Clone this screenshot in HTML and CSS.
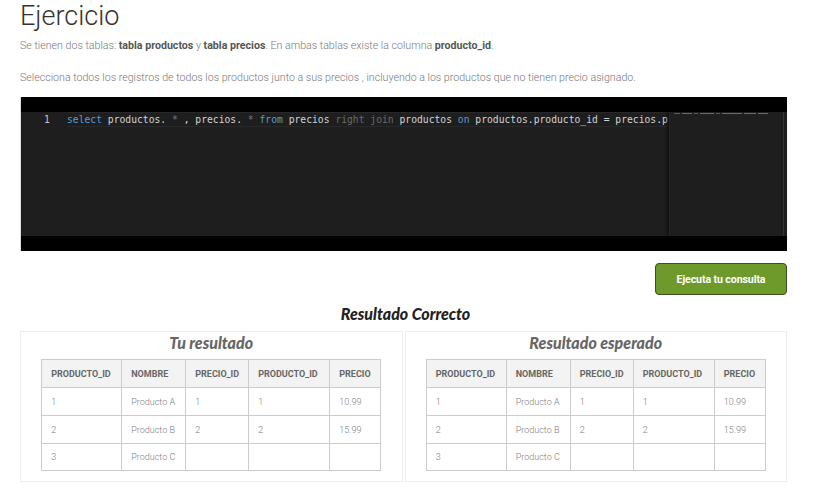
FILE: index.html
```html
<!DOCTYPE html>
<html lang="es">
<head>
<meta charset="utf-8">
<title>Ejercicio</title>
<link rel="stylesheet" href="styles.css">
</head>
<body>
<div class="page">
  <h1 class="title">Ejercicio</h1>
  <p class="text">Se tienen dos tablas: <b>tabla productos</b> y <b>tabla precios</b>. En ambas tablas existe la columna <b>producto_id</b>.</p>
  <p class="text second">Selecciona todos los registros de todos los productos junto a sus precios , incluyendo a los productos que no tienen precio asignado.</p>

  <div class="editor">
    <div class="editor-bar"></div>
    <div class="editor-body">
      <div class="code-area">
        <div class="line">
          <span class="ln">1</span>
          <span class="code"><span class="kw">select</span> productos. <span class="op">*</span> , precios. <span class="op">*</span> <span class="kw">from</span> precios <span class="dim">right join</span> productos <span class="kw">on</span> productos.producto_id = precios.producto_id</span>
        </div>
      </div>
      <div class="minimap">
        <div class="mini-line">
          <span class="mb b w6"></span><span class="mb g w10"></span><span class="mb b w4"></span><span class="mb g w14"></span><span class="mb b w4"></span><span class="mb g w20"></span><span class="mb g w12"></span><span class="mb g w10"></span>
        </div>
        <div class="mini-scroll"></div>
      </div>
    </div>
    <div class="editor-bar"></div>
  </div>

  <div class="actions">
    <button class="run-btn">Ejecuta tu consulta</button>
  </div>

  <h2 class="status">Resultado Correcto</h2>

  <div class="results">
    <div class="panel">
      <h3 class="panel-title">Tu resultado</h3>
      <table class="grid">
        <colgroup><col class="c1"><col class="c2"><col class="c3"><col class="c4"><col class="c5"></colgroup>
        <thead><tr><th>PRODUCTO_ID</th><th>NOMBRE</th><th>PRECIO_ID</th><th>PRODUCTO_ID</th><th>PRECIO</th></tr></thead>
        <tbody>
          <tr><td>1</td><td>Producto A</td><td>1</td><td>1</td><td>10.99</td></tr>
          <tr><td>2</td><td>Producto B</td><td>2</td><td>2</td><td>15.99</td></tr>
          <tr><td>3</td><td>Producto C</td><td></td><td></td><td></td></tr>
        </tbody>
      </table>
    </div>
    <div class="panel">
      <h3 class="panel-title">Resultado esperado</h3>
      <table class="grid">
        <colgroup><col class="c1"><col class="c2"><col class="c3"><col class="c4"><col class="c5"></colgroup>
        <thead><tr><th>PRODUCTO_ID</th><th>NOMBRE</th><th>PRECIO_ID</th><th>PRODUCTO_ID</th><th>PRECIO</th></tr></thead>
        <tbody>
          <tr><td>1</td><td>Producto A</td><td>1</td><td>1</td><td>10.99</td></tr>
          <tr><td>2</td><td>Producto B</td><td>2</td><td>2</td><td>15.99</td></tr>
          <tr><td>3</td><td>Producto C</td><td></td><td></td><td></td></tr>
        </tbody>
      </table>
    </div>
  </div>
</div>
</body>
</html>
```

FILE: styles.css
```css
* { box-sizing: border-box; }
html, body { margin: 0; padding: 0; background: #fff; }
body { font-family: Roboto, "Liberation Sans", sans-serif; }

.page {
  width: 838px;
  padding: 0 51px 0 20px;
}

.title {
  margin: 0;
  font-family: Roboto, sans-serif;
  font-weight: 300;
  font-size: 27px;
  line-height: 32px;
  color: #333;
}

.text {
  margin: 6px 0 0;
  font-size: 10.65px;
  line-height: 16px;
  font-weight: 300;
  color: #777;
}
.text b { font-weight: 700; color: #555; }
.text.second { margin-top: 16px; }

.editor {
  margin-top: 11px;
  height: 154px;
  background: #1e1e1e;
  display: flex;
  flex-direction: column;
  border-left: 1px solid #ddd;
}
.editor-bar { height: 15px; background: #000; flex: none; }
.editor-body { flex: 1; display: flex; min-height: 0; }
.code-area { width: 648px; overflow: hidden; flex: none; }
.line {
  display: flex;
  height: 15px;
  align-items: center;
  white-space: nowrap;
  font-family: "DejaVu Sans Mono", "Liberation Mono", monospace;
  font-size: 9.7px;
}
.ln { width: 46px; flex: none; padding-left: 23px; color: #c6c6c6; }
.code {
  color: #d4d4d4;
  border-top: 1px solid #282828;
  border-bottom: 1px solid #282828;
  line-height: 13px;
  flex: 1;
}
.kw { color: #569cd6; }
.op { color: #7a7a7a; }
.dim { color: #6a6a6a; }

.minimap {
  flex: 1;
  min-width: 0;
  display: flex;
  border-left: 1px solid #262626;
  box-shadow: -2px 0 3px rgba(0,0,0,0.5);
  padding-left: 4px;
}
.mini-line { flex: 1; min-width: 0; overflow: hidden; display: flex; gap: 2px; height: 3px; margin-top: 1px; }
.mb { height: 1px; display: block; flex: none; }
.mb.b { background: #3f5f80; }
.mb.g { background: #6a6a6a; }
.w4 { width: 4px; } .w6 { width: 6px; } .w10 { width: 10px; } .w12 { width: 12px; }
.w14 { width: 14px; } .w20 { width: 20px; }
.mini-scroll { width: 4px; border-left: 1px solid #333; flex: none; }

.actions {
  display: flex;
  justify-content: flex-end;
  margin-top: 12px;
}
.run-btn {
  width: 132px;
  height: 32px;
  background: #6d9a2b;
  border: 1px solid #3c4f1e;
  border-radius: 4px;
  color: #fff;
  font-family: Roboto, sans-serif;
  font-weight: 700;
  font-size: 10.6px;
  letter-spacing: -0.1px;
  padding: 0;
}

.status {
  margin: 9px 0 0;
  text-align: center;
  font-family: Lato, sans-serif;
  font-style: italic;
  font-weight: 900;
  font-size: 16px;
  line-height: 20px;
  color: #222;
  padding-left: 4px;
}

.results {
  margin-top: 7px;
  display: flex;
  gap: 2px;
}
.panel {
  flex: 1;
  height: 151px;
  border: 1px solid #eee;
  display: flex;
  flex-direction: column;
  align-items: center;
}
.panel-title {
  margin: 0;
  font-family: Lato, sans-serif;
  font-style: italic;
  font-weight: 900;
  font-size: 16px;
  line-height: 22px;
  color: #666;
}
.grid {
  margin-top: 5px;
  border-collapse: collapse;
  width: 339px;
  table-layout: fixed;
  font-size: 9px;
}
.c1 { width: 80px; } .c2 { width: 64px; } .c3 { width: 63px; } .c4 { width: 81px; } .c5 { width: 51px; }
.grid th, .grid td {
  border: 1px solid #ccc;
  text-align: left;
  padding: 0 0 0 9px;
  white-space: nowrap;
}
.grid th {
  height: 28px;
  background: #f3f3f3;
  color: #666;
  font-weight: 700;
}
.grid td {
  height: 28px;
  color: #808080;
  font-weight: 300;
}
.grid tbody tr:last-child td { height: 27px; }
```
